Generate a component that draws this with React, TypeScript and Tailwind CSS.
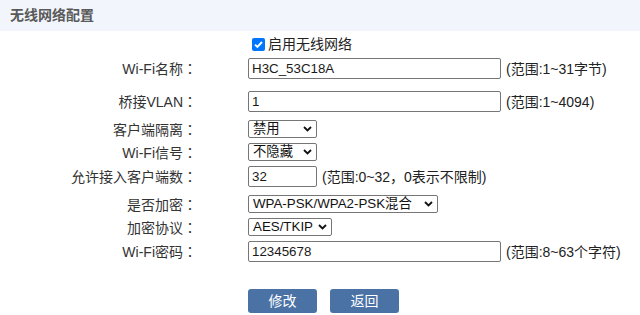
import React from "react";

const FONT = '"Liberation Sans", "Noto Sans CJK SC", sans-serif';

function Chevron() {
  return (
    <svg width="9" height="6" viewBox="0 0 9 6" className="shrink-0">
      <path d="M1 1 L4.5 4.5 L8 1" fill="none" stroke="#111" strokeWidth="1.8" />
    </svg>
  );
}

function Label({ children }: { children: React.ReactNode }) {
  return (
    <div className="w-[248px] pr-[51px] text-right text-[14px] text-[#333] shrink-0 leading-none">
      {children}
      <span style={{ fontFamily: '"Noto Sans CJK TC", sans-serif' }}>：</span>
    </div>
  );
}

function Input({ value, w }: { value: string; w: string }) {
  return (
    <div
      className={`${w} h-[21px] border border-[#767676] rounded-[2px] flex items-center pl-[3px] text-[13.33px] text-[#1a1a1a] leading-none`}
    >
      {value}
    </div>
  );
}

function Select({ value, w }: { value: string; w: string }) {
  return (
    <div
      className={`${w} h-[18px] border border-[#767676] rounded-[2px] flex items-center justify-between pl-[4px] pr-[4px] text-[13.33px] text-[#111] leading-none`}
    >
      <span>{value}</span>
      <Chevron />
    </div>
  );
}

function Note({ children }: { children: React.ReactNode }) {
  return <span className="ml-[5px] text-[14px] text-[#222] leading-none">{children}</span>;
}

export default function App() {
  return (
    <div className="w-[640px] h-[315px] bg-white overflow-hidden" style={{ fontFamily: FONT }}>
      <div className="h-[31px] bg-[#f2f6fc] flex items-center pl-[10px]">
        <span className="text-[14px] font-bold text-[#595959]">无线网络配置</span>
      </div>

      <div className="h-[26px] flex items-center">
        <div className="w-[248px] shrink-0" />
        <span className="ml-[4px] w-[13px] h-[13px] rounded-[2px] bg-[#0075ff] flex items-center justify-center">
          <svg width="11" height="11" viewBox="0 0 11 11">
            <path d="M2 5.6 L4.4 8 L9 3" fill="none" stroke="#fff" strokeWidth="1.9" />
          </svg>
        </span>
        <span className="ml-[3px] text-[14px] text-[#222] leading-none">启用无线网络</span>
      </div>

      <div className="h-[23px] flex items-center">
        <Label>Wi-Fi名称</Label>
        <Input value="H3C_53C18A" w="w-[253px]" />
        <Note>(范围:1~31字节)</Note>
      </div>

      <div className="h-[23px] mt-[10px] flex items-center">
        <Label>桥接VLAN</Label>
        <Input value="1" w="w-[253px]" />
        <Note>(范围:1~4094)</Note>
      </div>

      <div className="h-[22px] mt-[5px] flex items-center">
        <Label>客户端隔离</Label>
        <Select value="禁用" w="w-[69px]" />
      </div>

      <div className="h-[22px] mt-[1px] flex items-center">
        <Label>Wi-Fi信号</Label>
        <Select value="不隐藏" w="w-[69px]" />
      </div>

      <div className="h-[23px] mt-[2px] flex items-center">
        <Label>允许接入客户端数</Label>
        <Input value="32" w="w-[69px]" />
        <Note>(范围:0~32，0表示不限制)</Note>
      </div>

      <div className="h-[22px] mt-[5px] flex items-center">
        <Label>是否加密</Label>
        <Select value="WPA-PSK/WPA2-PSK混合" w="w-[190px]" />
      </div>

      <div className="h-[22px] mt-[1px] flex items-center">
        <Label>加密协议</Label>
        <Select value="AES/TKIP" w="w-[84px]" />
      </div>

      <div className="h-[23px] mt-[2px] flex items-center">
        <Label>Wi-Fi密码</Label>
        <Input value="12345678" w="w-[253px]" />
        <Note>(范围:8~63个字符)</Note>
      </div>

      <div className="h-[24px] mt-[26px] flex items-center">
        <div className="w-[248px] shrink-0" />
        <button className="w-[69px] h-[24px] rounded-[3px] bg-[#4a72a5] text-white text-[14px] leading-none flex items-center justify-center">
          修改
        </button>
        <button className="ml-[13px] w-[69px] h-[24px] rounded-[3px] bg-[#4a72a5] text-white text-[14px] leading-none flex items-center justify-center">
          返回
        </button>
      </div>
    </div>
  );
}
